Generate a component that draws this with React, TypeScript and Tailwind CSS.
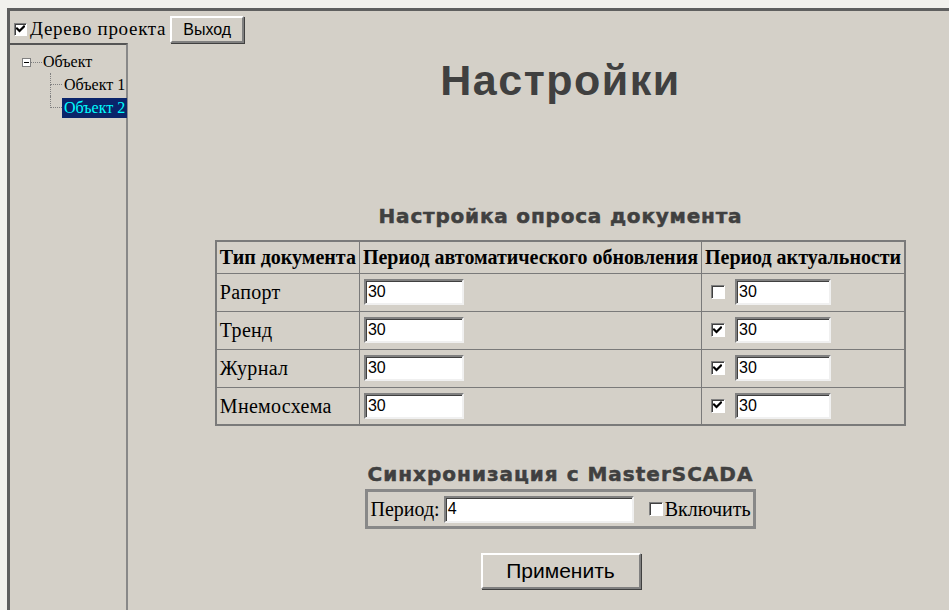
import React from 'react';

const rows = [
  { name: 'Рапорт', auto: '30', actual: '30', checked: false },
  { name: 'Тренд', auto: '30', actual: '30', checked: true },
  { name: 'Журнал', auto: '30', actual: '30', checked: true },
  { name: 'Мнемосхема', auto: '30', actual: '30', checked: true },
];

const serif = "font-['Liberation_Serif','Times_New_Roman',serif]";
const sans = "font-['Liberation_Sans',Arial,sans-serif]";
const heavy = "font-['DejaVu_Sans',Verdana,sans-serif] font-bold text-[#404040] [-webkit-text-stroke:0.5px_#404040]";

// классический чекбокс в стиле Windows
const Check = ({ checked, size = 'w-[14px] h-[14px]' }: { checked: boolean; size?: string }) => (
  <span className={`inline-flex ${size} shrink-0 bg-white border border-t-[#808080] border-l-[#808080] border-r-white border-b-white shadow-[inset_1px_1px_0_#404040] items-center justify-center`}>
    {checked && (
      <svg width="9" height="9" viewBox="0 0 9 9">
        <path d="M1 3.5 L3.5 6 L8 1.5" stroke="#000" strokeWidth="2.2" fill="none" strokeLinecap="square" />
      </svg>
    )}
  </span>
);

const TextBox = ({ value, width, height = 'h-[26px]' }: { value: string; width: string; height?: string }) => (
  <div
    className={`${width} ${height} bg-white border-2 border-t-[#808080] border-l-[#808080] border-r-[#f0f0f0] border-b-[#f0f0f0] shadow-[inset_1px_1px_0_#404040] flex items-center pl-[2px] text-[16px] text-black ${sans}`}
  >
    {value}
  </div>
);

const RaisedButton = ({ children, className }: { children: React.ReactNode; className: string }) => (
  <button
    className={`bg-[#d4d0c8] border-2 border-t-white border-l-white border-r-[#808080] border-b-[#808080] shadow-[1px_1px_0_#404040] text-black ${sans} ${className}`}
  >
    {children}
  </button>
);

// ветка дерева: пунктир слева, last — без продолжения вниз
const Branch = ({ last, children }: { last?: boolean; children: React.ReactNode }) => (
  <div className="flex h-[23px]">
    <div className="w-[12px] flex flex-col shrink-0">
      <span className="h-[12px] border-l border-b border-dotted border-[#808080]" />
      <span className={`flex-1 ${last ? '' : 'border-l border-dotted border-[#808080]'}`} />
    </div>
    <div className="flex items-center">{children}</div>
  </div>
);

const Tree = () => (
  <div className={`w-[118px] shrink-0 border-t-2 border-t-[#555] border-r-2 border-r-[#888] pt-[6px] pl-[12px] text-[16px] text-black ${serif}`}>
    <div className="flex items-center h-[22px]">
      <span className="w-[9px] h-[9px] border border-[#808080] bg-white flex items-center justify-center">
        <span className="w-[5px] h-px bg-black" />
      </span>
      <span className="w-[11px] border-t border-dotted border-[#808080]" />
      <span className="ml-px">Объект</span>
    </div>
    <div className="ml-[28px]">
      <Branch>
        <span className="ml-[2px] whitespace-nowrap">Объект 1</span>
      </Branch>
      <Branch last>
        <span className="whitespace-nowrap bg-[#0a246a] text-[#00ffff] px-[2px] h-[20px] leading-[20px]">Объект 2</span>
      </Branch>
    </div>
  </div>
);

export default function App() {
  return (
    <div className="w-[949px] h-[610px] bg-[#f2f1ed] pt-[8px] pl-[7px] overflow-hidden">
      <div className="h-full bg-[#d4d0c8] border-t-[3px] border-l-[3px] border-t-[#5f5f5f] border-l-[#5f5f5f] flex flex-col">
        <div className="flex items-center h-[32px] pl-[4px]">
          <label className={`flex items-center gap-[3px] text-[19px] text-black pt-[4px] ${serif}`}>
            <Check checked size="w-[13px] h-[13px]" />
            <span className="tracking-[0.7px]">Дерево проекта</span>
          </label>
          <RaisedButton className="ml-[4px] w-[74px] h-[27px] text-[16px] self-end">Выход</RaisedButton>
        </div>

        <div className="flex flex-1">
          <Tree />

          <main className="flex-1 flex flex-col items-center pl-[44px]">
            <h1 className={`mt-[12px] text-[43px] font-bold tracking-[1.5px] text-[#404040] leading-[50px] ${sans}`}>Настройки</h1>

            <h2 className={`mt-[99px] text-[20px] leading-[24px] tracking-[0.8px] ${heavy}`}>
              Настройка опроса документа
            </h2>

            <table className={`mt-[12px] border-collapse border-2 border-[#7a7a7a] text-[20px] text-black ${serif}`}>
              <thead>
                <tr className="h-[32px]">
                  <th className="border border-[#7a7a7a] px-[3px] text-left font-bold">Тип документа</th>
                  <th className="border border-[#7a7a7a] px-[3px] text-left font-bold">Период автоматического обновления</th>
                  <th className="border border-[#7a7a7a] px-[3px] text-left font-bold">Период актуальности</th>
                </tr>
              </thead>
              <tbody>
                {rows.map((r) => (
                  <tr key={r.name} className="h-[38px]">
                    <td className="border border-[#7a7a7a] px-[3px] tracking-[0.3px]">{r.name}</td>
                    <td className="border border-[#7a7a7a] px-[4px]">
                      <TextBox value={r.auto} width="w-[100px]" />
                    </td>
                    <td className="border border-[#7a7a7a] px-[9px]">
                      <div className="flex items-center gap-[10px]">
                        <Check checked={r.checked} />
                        <TextBox value={r.actual} width="w-[96px]" />
                      </div>
                    </td>
                  </tr>
                ))}
              </tbody>
            </table>

            <h2 className={`mt-[36px] text-[20px] leading-[24px] tracking-[1px] ${heavy}`}>
              Синхронизация с MasterSCADA
            </h2>

            <div className={`mt-[3px] flex items-center border-[3px] border-[#888] p-[2px] text-[20px] text-black ${serif}`}>
              <span className="mr-[4px]">Период:</span>
              <TextBox value="4" width="w-[190px]" height="h-[27px]" />
              <label className="ml-[15px] flex items-center gap-[2px]">
                <Check checked={false} />
                <span>Включить</span>
              </label>
            </div>

            <RaisedButton className="mt-[24px] w-[160px] h-[36px] text-[21px]">Применить</RaisedButton>
          </main>
        </div>
      </div>
    </div>
  );
}
